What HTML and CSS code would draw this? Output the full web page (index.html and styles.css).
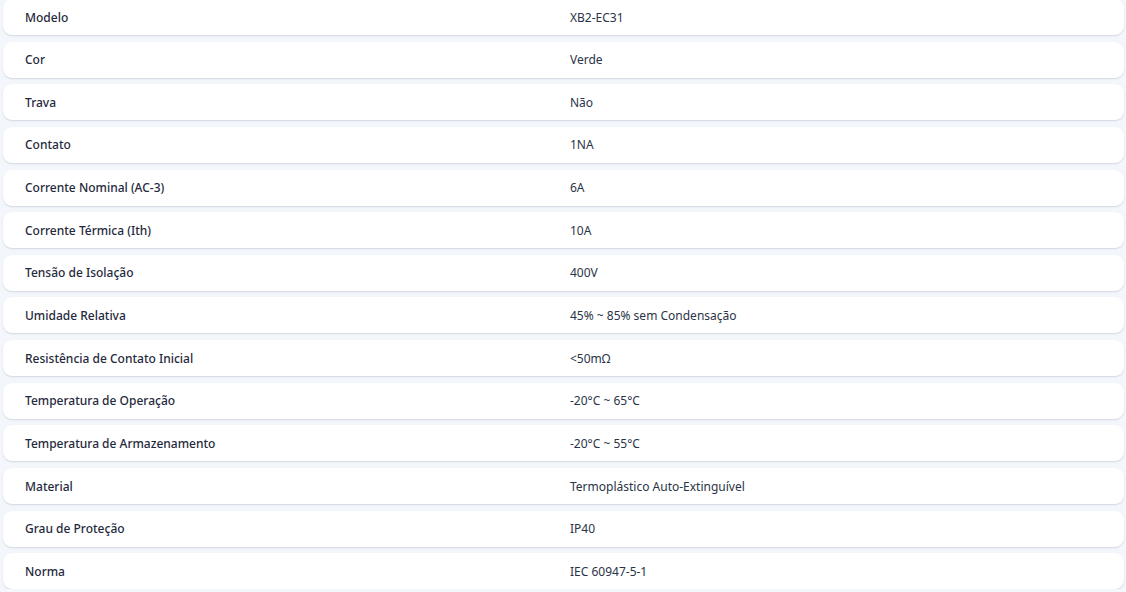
FILE: index.html
```html
<!DOCTYPE html>
<html lang="pt">
<head>
<meta charset="utf-8">
<link rel="stylesheet" href="styles.css">
</head>
<body>
<div class="specs">
  <div class="row"><div class="label">Modelo</div><div class="value">XB2-EC31</div></div>
  <div class="row"><div class="label">Cor</div><div class="value">Verde</div></div>
  <div class="row"><div class="label">Trava</div><div class="value">Não</div></div>
  <div class="row"><div class="label">Contato</div><div class="value">1NA</div></div>
  <div class="row"><div class="label">Corrente Nominal (AC-3)</div><div class="value">6A</div></div>
  <div class="row"><div class="label">Corrente Térmica (Ith)</div><div class="value">10A</div></div>
  <div class="row"><div class="label">Tensão de Isolação</div><div class="value">400V</div></div>
  <div class="row"><div class="label">Umidade Relativa</div><div class="value">45% ~ 85% sem Condensação</div></div>
  <div class="row"><div class="label">Resistência de Contato Inicial</div><div class="value">&lt;50mΩ</div></div>
  <div class="row"><div class="label">Temperatura de Operação</div><div class="value">-20°C ~ 65°C</div></div>
  <div class="row"><div class="label">Temperatura de Armazenamento</div><div class="value">-20°C ~ 55°C</div></div>
  <div class="row"><div class="label">Material</div><div class="value">Termoplástico Auto-Extinguível</div></div>
  <div class="row"><div class="label">Grau de Proteção</div><div class="value">IP40</div></div>
  <div class="row"><div class="label">Norma</div><div class="value">IEC 60947-5-1</div></div>
</div>
</body>
</html>
```
FILE: styles.css
```css
html, body {
  margin: 0;
  padding: 0;
  background: #f3f6fa;
  overflow: hidden;
}
body {
  font-family: "Noto Sans", "Open Sans", "Liberation Sans", sans-serif;
  font-size: 12px;
  color: #1f2a3c;
}
.specs {
  display: flex;
  flex-direction: column;
  gap: 6.65px;
  margin: -1px 2px 0 3px;
}
.row {
  height: 36px;
  display: grid;
  grid-template-columns: 545px 1fr;
  align-items: center;
  background: #fff;
  border-radius: 9px;
  box-shadow: 0 1px 2px rgba(30, 50, 90, 0.10), 0 1px 1px rgba(30, 50, 90, 0.05);
}
.label {
  padding-left: 22px;
  font-weight: 500;
  color: #1f2a3c;
}
.value {
  padding-left: 22px;
  font-weight: 400;
  color: #2a3446;
}
```
